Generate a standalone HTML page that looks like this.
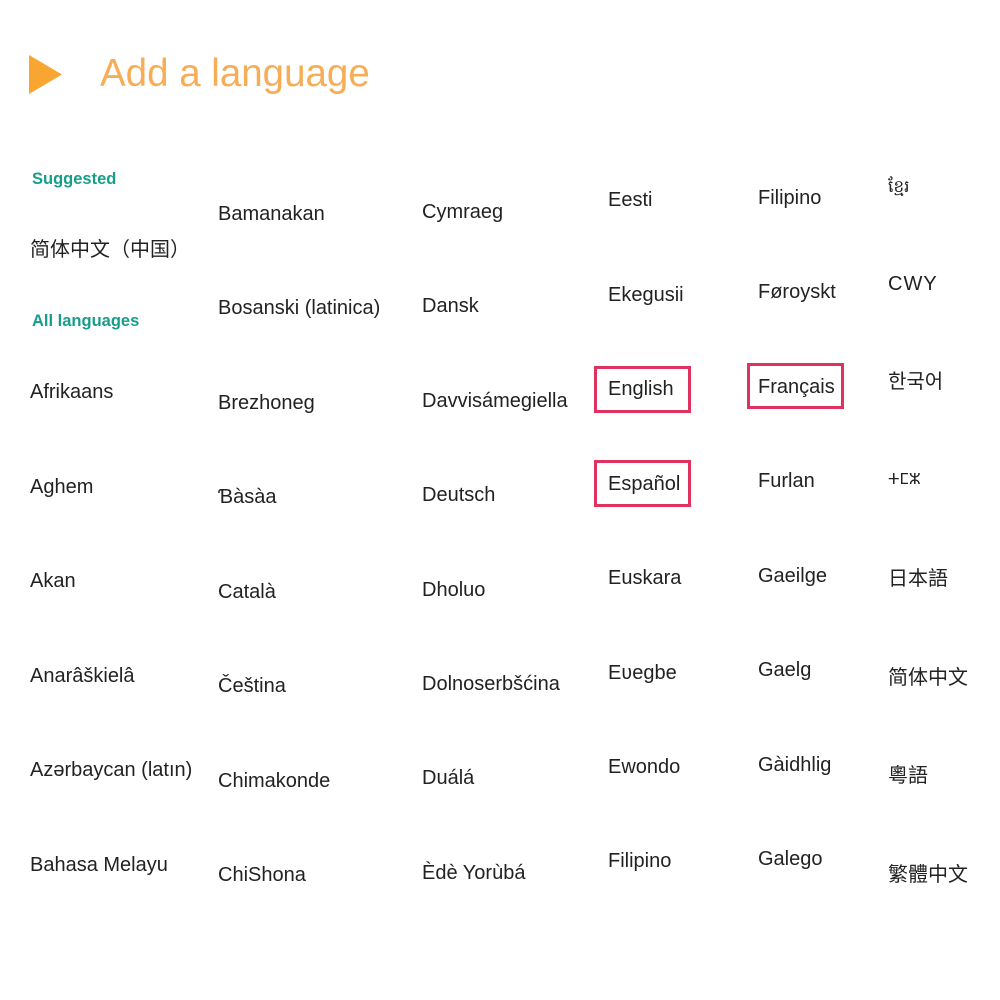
<!DOCTYPE html>
<html><head><meta charset="utf-8"><style>
body{margin:0;width:1000px;height:1000px;background:#fff;position:relative;overflow:hidden;font-family:"Liberation Sans","Noto Sans CJK SC","DejaVu Sans",sans-serif;}
.t{position:absolute;font-size:20px;line-height:24px;color:#222;white-space:nowrap;margin-top:1px;}
.g{position:absolute;font-size:16.5px;line-height:24px;color:#169e8a;font-weight:bold;margin-top:1px;}
.b{position:absolute;border:3px solid #e0325e;box-sizing:border-box;}
</style></head><body>
<svg style="position:absolute;left:0;top:0" width="100" height="100"><polygon points="29,55 62,74.5 29,94" fill="#f9a532"/></svg>
<div style="position:absolute;left:100px;top:49px;font-size:38.5px;line-height:50px;color:#f7ad55;font-weight:300;">Add a language</div>
<div class="g" style="left:32px;top:166px">Suggested</div>
<div class="t" style="left:30px;top:237px">简体中文（中国）</div>
<div class="g" style="left:32px;top:308px">All languages</div>

<div class="t" style="left:30px;top:379px">Afrikaans</div>
<div class="t" style="left:30px;top:474px">Aghem</div>
<div class="t" style="left:30px;top:568px">Akan</div>
<div class="t" style="left:30px;top:663px">Anarâškielâ</div>
<div class="t" style="left:30px;top:757px">Azərbaycan (latın)</div>
<div class="t" style="left:30px;top:852px">Bahasa Melayu</div>

<div class="t" style="left:218px;top:201px">Bamanakan</div>
<div class="t" style="left:218px;top:295px">Bosanski (latinica)</div>
<div class="t" style="left:218px;top:390px">Brezhoneg</div>
<div class="t" style="left:218px;top:484px">Ɓàsàa</div>
<div class="t" style="left:218px;top:579px">Català</div>
<div class="t" style="left:218px;top:673px">Čeština</div>
<div class="t" style="left:218px;top:768px">Chimakonde</div>
<div class="t" style="left:218px;top:862px">ChiShona</div>

<div class="t" style="left:422px;top:199px">Cymraeg</div>
<div class="t" style="left:422px;top:293px">Dansk</div>
<div class="t" style="left:422px;top:388px">Davvisámegiella</div>
<div class="t" style="left:422px;top:482px">Deutsch</div>
<div class="t" style="left:422px;top:577px">Dholuo</div>
<div class="t" style="left:422px;top:671px">Dolnoserbšćina</div>
<div class="t" style="left:422px;top:765px">Duálá</div>
<div class="t" style="left:422px;top:860px">Èdè Yorùbá</div>

<div class="t" style="left:608px;top:187px">Eesti</div>
<div class="t" style="left:608px;top:282px">Ekegusii</div>
<div class="t" style="left:608px;top:376px">English</div>
<div class="t" style="left:608px;top:471px">Español</div>
<div class="t" style="left:608px;top:565px">Euskara</div>
<div class="t" style="left:608px;top:660px">Eʋegbe</div>
<div class="t" style="left:608px;top:754px">Ewondo</div>
<div class="t" style="left:608px;top:848px">Filipino</div>

<div class="t" style="left:758px;top:185px">Filipino</div>
<div class="t" style="left:758px;top:279px">Føroyskt</div>
<div class="t" style="left:758px;top:374px">Français</div>
<div class="t" style="left:758px;top:468px">Furlan</div>
<div class="t" style="left:758px;top:563px">Gaeilge</div>
<div class="t" style="left:758px;top:657px">Gaelg</div>
<div class="t" style="left:758px;top:752px">Gàidhlig</div>
<div class="t" style="left:758px;top:846px">Galego</div>

<div class="t" style="left:888px;top:174px;font-size:17px">ខ្មែរ</div>
<div class="t" style="left:888px;top:271px;letter-spacing:1px">CWY</div>
<div class="t" style="left:888px;top:369px">한국어</div>
<div class="t" style="left:888px;top:467px;font-size:15px">ⵜⵎⵣ</div>
<div class="t" style="left:888px;top:566px">日本語</div>
<div class="t" style="left:888px;top:665px">简体中文</div>
<div class="t" style="left:888px;top:763px">粵語</div>
<div class="t" style="left:888px;top:862px">繁體中文</div>

<div class="b" style="left:594px;top:366px;width:97px;height:47px"></div>
<div class="b" style="left:594px;top:460px;width:97px;height:47px"></div>
<div class="b" style="left:747px;top:363px;width:97px;height:46px"></div>
</body></html>
